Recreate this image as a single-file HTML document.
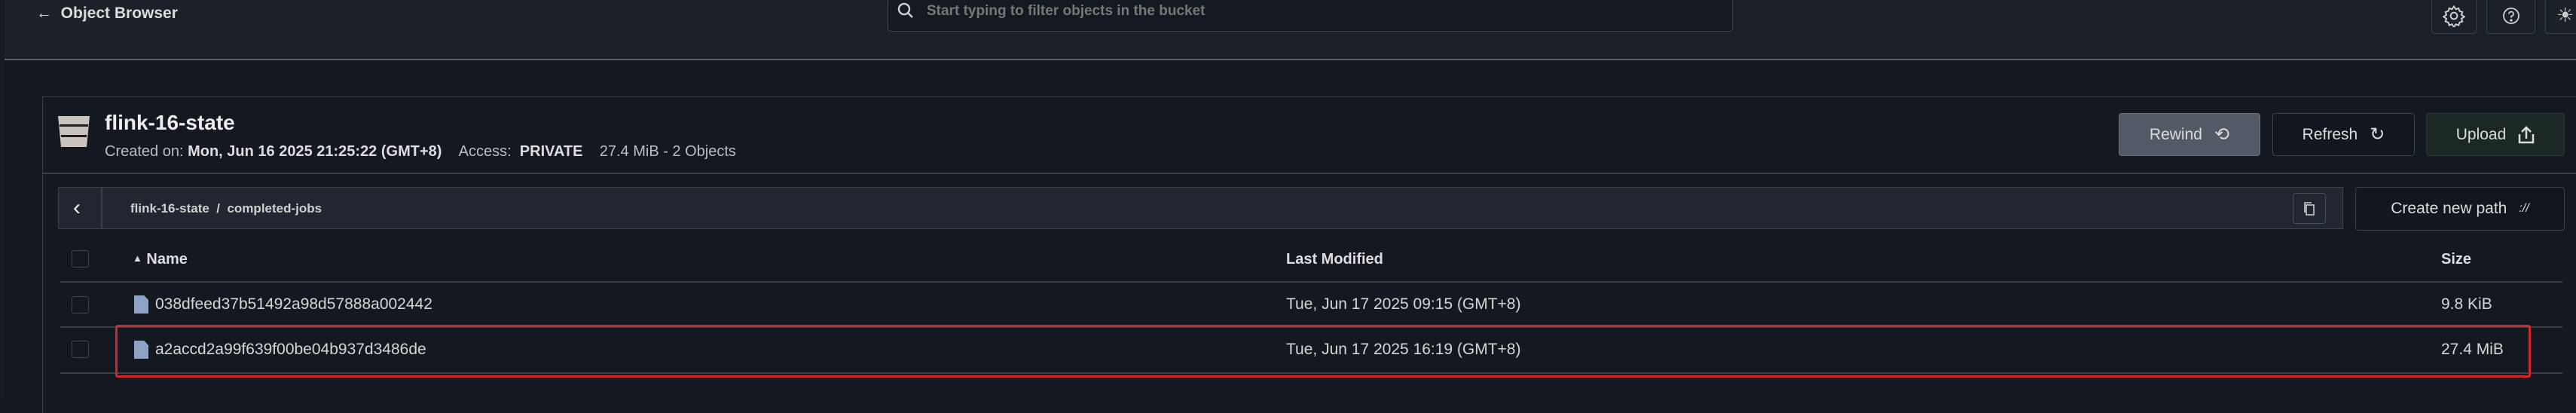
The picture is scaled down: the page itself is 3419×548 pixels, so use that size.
<!DOCTYPE html>
<html><head><meta charset="utf-8"><style>
*{margin:0;padding:0;box-sizing:border-box}
body{width:3419px;height:530px;overflow:hidden;background:#141821;font-family:"Liberation Sans",sans-serif;color:#e4e4e4;position:relative}
.a{position:absolute}
.hdr{left:0;top:0;width:3419px;height:80px;background:#1c2129;border-bottom:2px solid #5a5e63}
.side{left:0;top:0;width:6px;height:530px;background:#161a21}
.btn{position:absolute;border:1.5px solid #3c424c;border-radius:4px;display:flex;align-items:center;justify-content:center;font-size:21px;color:#dcdcdc;gap:16px}
.t{white-space:nowrap}
.cb{position:absolute;left:95px;width:23px;height:23px;border:1.5px solid #3f444c;border-radius:3px}
.line{position:absolute;left:80px;width:3321px;height:1.5px;background:#3a3f47}
.fi{position:absolute;left:178px;width:19px;height:24px;background:#8ea3c4;clip-path:polygon(0 0,70% 0,100% 25%,100% 100%,0 100%)}
</style></head><body>
<div class="a hdr"></div>
<div class="a side"></div>
<div class="a t" style="left:48px;top:6px;font-size:21px;font-weight:bold;color:#dcdcdc">←&nbsp; Object Browser</div>
<div class="a" style="left:1178px;top:-2px;width:1122px;height:44px;background:#151922;border:1.5px solid #3c424c;border-radius:4px"></div>
<svg class="a" style="left:1190px;top:2px" width="24" height="24" viewBox="0 0 24 24"><circle cx="10" cy="10" r="7" fill="none" stroke="#ccc" stroke-width="2.5"/><path d="M15 15l6 6" stroke="#ccc" stroke-width="2.5"/></svg>
<div class="a t" style="left:1230px;top:4px;font-size:19px;font-weight:bold;color:#777">Start typing to filter objects in the bucket</div>
<div class="btn" style="left:3227px;top:-4px;width:60px;height:49px"><svg width="30" height="30" viewBox="0 0 24 24" fill="none" stroke="#ccc" stroke-width="1.6"><circle cx="12" cy="12" r="3.5"/><path d="M12 2l2 3 3-1 1 3 3 1-1 3 3 2-3 2 1 3-3 1-1 3-3-1-2 3-2-3-3 1-1-3-3-1 1-3-3-2 3-2-1-3 3-1 1-3 3 1z"/></svg></div>
<div class="btn" style="left:3300px;top:-4px;width:65px;height:49px"><svg width="24" height="24" viewBox="0 0 24 24" fill="none" stroke="#ccc" stroke-width="1.8"><circle cx="12" cy="12" r="10"/><path d="M9 9.5a3 3 0 1 1 3 3v2"/><circle cx="12" cy="18" r=".8" fill="#ccc"/></svg></div>
<div class="btn" style="left:3378px;top:-4px;width:60px;height:49px;justify-content:flex-start;padding-left:14px"><span style="color:#ccc;font-size:26px">☀</span></div>

<div class="a" style="left:56px;top:128px;width:3363px;height:420px;border-top:1.5px solid #3a3f47;border-left:1.5px solid #3a3f47"></div>
<div class="a" style="left:56px;top:229px;width:3363px;height:1.5px;background:#3a3f47"></div>
<svg class="a" style="left:76px;top:152px" width="44" height="45" viewBox="0 0 44 45"><path d="M1 2h42l-4 41H5z" fill="#c9c4bd" rx="3"/><rect x="3" y="13" width="38" height="3" fill="#1a1e26"/><rect x="5" y="27" width="34" height="3" fill="#1a1e26"/></svg>
<div class="a t" style="left:139px;top:147px;font-size:28px;font-weight:bold;color:#ececec">flink-16-state</div>
<div class="a t" style="left:139px;top:190px;font-size:20px;color:#bdbdbd">Created on: <b style="color:#ddd">Mon, Jun 16 2025 21:25:22 (GMT+8)</b>&nbsp;&nbsp;&nbsp;&nbsp;Access:&nbsp; <b style="color:#ddd">PRIVATE</b>&nbsp;&nbsp;&nbsp;&nbsp;27.4 MiB - 2 Objects</div>
<div class="btn" style="left:2812px;top:150px;width:188px;height:57px;background:#525a66;border-color:#6a717b">Rewind <span style="font-size:24px">⟲</span></div>
<div class="btn" style="left:3016px;top:150px;width:189px;height:57px;background:#12161e">Refresh <span style="font-size:24px">↻</span></div>
<div class="btn" style="left:3220px;top:150px;width:184px;height:57px;background:#1c2825;border-color:#2f3a37">Upload <svg width="22" height="24" viewBox="0 0 22 24" fill="none" stroke="#ddd" stroke-width="2.5"><path d="M11 17V2M5 8l6-6 6 6M2 11v11h18V11"/></svg></div>

<div class="a" style="left:77px;top:248px;width:3033px;height:56px;background:#212631;border:1.5px solid #3c424c"></div>
<div class="a" style="left:134px;top:249px;width:1.5px;height:54px;background:#3c424c"></div>
<div class="a t" style="left:97px;top:259px;font-size:30px;color:#eee">‹</div>
<div class="a t" style="left:173px;top:267px;font-size:17px;font-weight:bold;color:#cfcfcf">flink-16-state&nbsp; / &nbsp;completed-jobs</div>
<div class="btn" style="left:3043px;top:256px;width:44px;height:41px;border-color:#4a505a"><svg width="16" height="20" viewBox="0 0 16 20" fill="none" stroke="#ccc" stroke-width="1.6"><rect x="4" y="5" width="10" height="13"/><path d="M2 15V2h9"/></svg></div>
<div class="btn" style="left:3126px;top:248px;width:278px;height:58px;background:#12161e">Create new path <span style="font-size:16px;font-style:italic">://</span></div>

<div class="cb" style="top:332px"></div>
<div class="a t" style="left:176px;top:333px;font-size:20px;font-weight:bold;color:#ddd"><span style="font-size:13px;vertical-align:3px">▲</span> Name</div>
<div class="a t" style="left:1707px;top:333px;font-size:20px;font-weight:bold;color:#ddd">Last Modified</div>
<div class="a t" style="left:3240px;top:333px;font-size:20px;font-weight:bold;color:#ddd">Size</div>
<div class="line" style="top:373px"></div>
<div class="cb" style="top:393px"></div>
<div class="fi" style="top:392px"></div>
<div class="a t" style="left:206px;top:392px;font-size:21px;color:#d6d6d6">038dfeed37b51492a98d57888a002442</div>
<div class="a t" style="left:1707px;top:392px;font-size:21px;color:#d6d6d6">Tue, Jun 17 2025 09:15 (GMT+8)</div>
<div class="a t" style="left:3240px;top:392px;font-size:21px;color:#d6d6d6">9.8 KiB</div>
<div class="line" style="top:433px"></div>
<div class="cb" style="top:452px"></div>
<div class="fi" style="top:452px"></div>
<div class="a t" style="left:206px;top:452px;font-size:21px;color:#d6d6d6">a2accd2a99f639f00be04b937d3486de</div>
<div class="a t" style="left:1707px;top:452px;font-size:21px;color:#d6d6d6">Tue, Jun 17 2025 16:19 (GMT+8)</div>
<div class="a t" style="left:3240px;top:452px;font-size:21px;color:#d6d6d6">27.4 MiB</div>
<div class="line" style="top:494px"></div>
<div class="a" style="left:153px;top:431px;width:3206px;height:70px;border:3px solid #d0282a;border-radius:3px"></div>
</body></html>
